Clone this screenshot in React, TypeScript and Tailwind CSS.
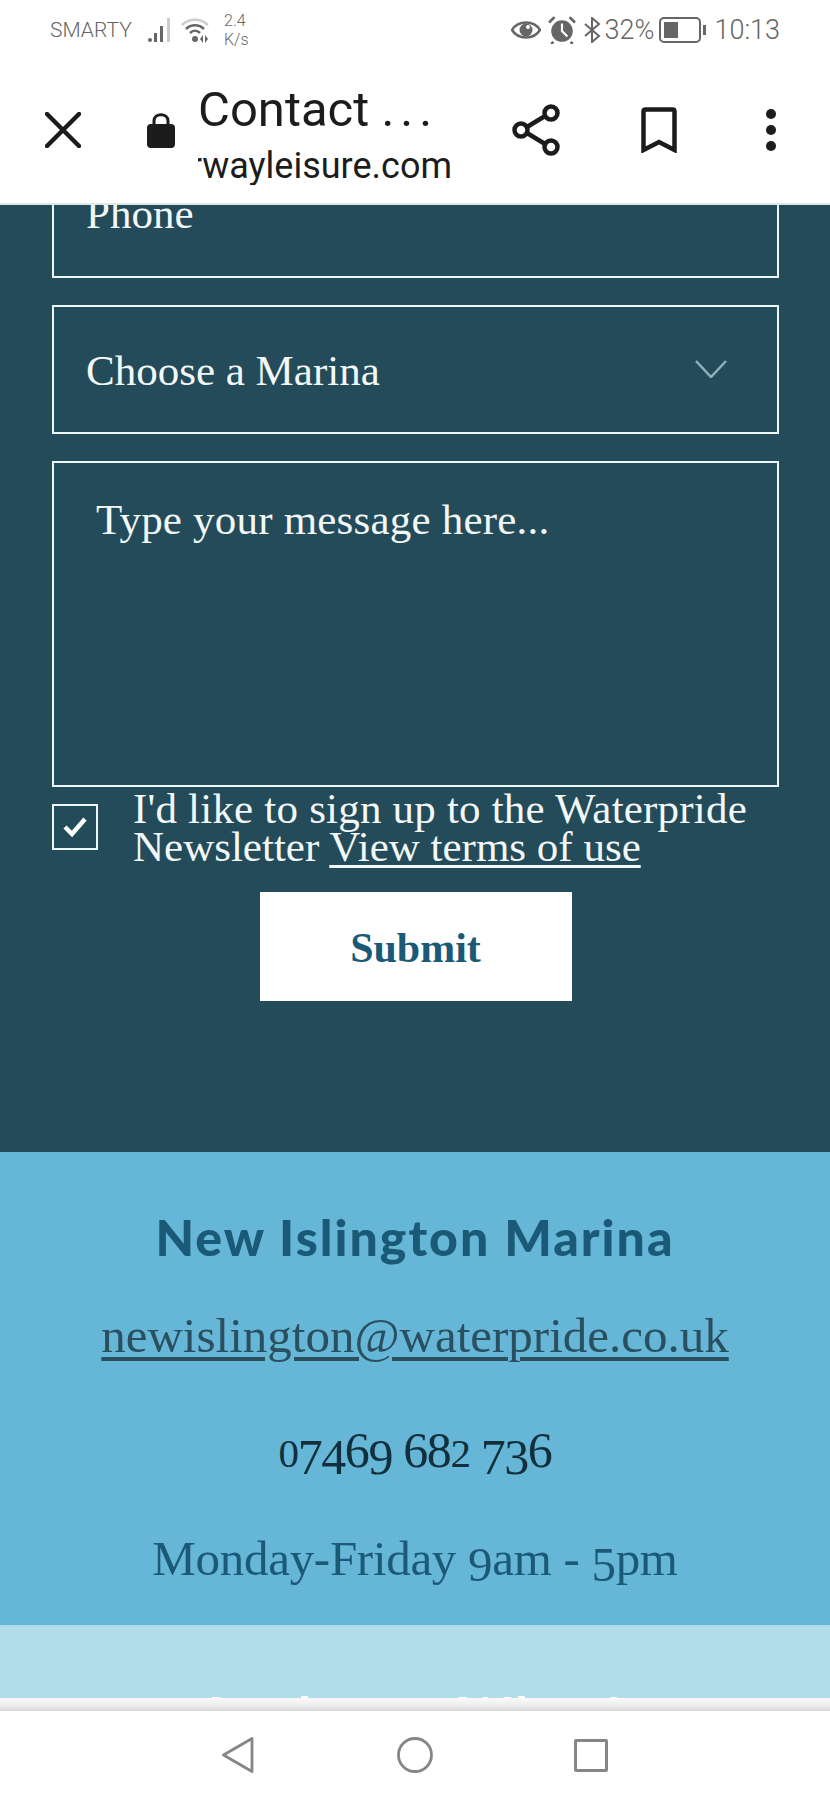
import React from "react";

const serif = "font-['Liberation_Serif',serif]";

// the site's serif has old-style figures, Liberation has none
function OldStyle({ text }: { text: string }) {
  return (
    <>
      {text.split("").map((c, i) => {
        if ("012".includes(c)) return <span key={i} className="text-[0.82em] leading-none">{c}</span>;
        if ("34579".includes(c)) return <span key={i} className="align-[-0.13em] leading-none">{c}</span>;
        return <span key={i}>{c}</span>;
      })}
    </>
  );
}

function StatusBar() {
  return (
    <div className="flex h-[70px] items-center bg-white pb-[10px] pl-[50px] text-[#666] font-['Roboto',sans-serif]">
      <span className="w-[98px] text-[21px] font-light leading-none">SMARTY</span>
      {/* signal */}
      <svg width="26" height="26" viewBox="0 0 26 26">
        <circle cx="2" cy="23" r="2" fill="#666" />
        <rect x="6" y="16" width="3" height="9" fill="#666" />
        <rect x="12" y="9" width="3" height="16" fill="#666" />
        <rect x="19" y="1" width="3" height="24" fill="#ccc" />
      </svg>
      {/* wifi */}
      <svg width="30" height="26" viewBox="0 0 30 26" className="ml-[7px]">
        <path d="M1 8 C8 1 20 1 27 8" fill="none" stroke="#ccc" strokeWidth="2.5" />
        <path d="M5 12 C10 7 18 7 23 12" fill="none" stroke="#666" strokeWidth="2.5" />
        <path d="M9 16 C12 13 16 13 19 16" fill="none" stroke="#666" strokeWidth="2.5" />
        <circle cx="14" cy="22" r="3" fill="#666" />
        <path d="M22 18 L22 26 L19 22 Z M24 18 L24 26 L27 22 Z" fill="#666" />
      </svg>
      <div className="ml-[13px] flex flex-col text-[16px] font-light leading-[19px]">
        <span>2.4</span>
        <span>K/s</span>
      </div>
      {/* eye */}
      <svg width="30" height="22" viewBox="0 0 30 22" className="ml-[262px]">
        <path d="M1 11 C7 1 23 1 29 11 C23 21 7 21 1 11 Z" fill="none" stroke="#666" strokeWidth="2.5" />
        <circle cx="15" cy="11" r="6.5" fill="#666" />
        <circle cx="17" cy="8" r="2" fill="#fff" />
      </svg>
      {/* alarm */}
      <svg width="28" height="28" viewBox="0 0 26 26" className="ml-[7px]">
        <circle cx="13" cy="14" r="10" fill="#666" />
        <path d="M1 6 L6 1 M25 6 L20 1 M5 24 L3 26 M21 24 L23 26" stroke="#666" strokeWidth="2.5" />
        <path d="M13 7 L13 14 L18 19" fill="none" stroke="#fff" strokeWidth="2" />
      </svg>
      {/* bluetooth */}
      <svg width="18" height="26" viewBox="0 0 18 26" className="ml-[7px]">
        <path d="M2 7 L16 19 L9 25 L9 1 L16 7 L2 19" fill="none" stroke="#666" strokeWidth="2" />
      </svg>
      <span className="ml-[4px] text-[27px] font-light leading-none">32%</span>
      {/* battery */}
      <svg width="47" height="26" viewBox="0 0 47 26" className="ml-[4px]">
        <rect x="1" y="1" width="40" height="24" rx="4" fill="none" stroke="#666" strokeWidth="2" />
        <rect x="5" y="5" width="14" height="16" fill="#666" />
        <rect x="44" y="8" width="3" height="10" fill="#666" />
      </svg>
      <span className="ml-[9px] text-[27px] font-light leading-none">10:13</span>
    </div>
  );
}

function Toolbar() {
  return (
    <div className="flex h-[135px] items-center border-b-2 border-[#dfe6e3] bg-white pb-[14px] text-[#1c1c1c]">
      <svg width="36" height="36" viewBox="0 0 36 36" className="ml-[45px]">
        <path d="M2 2 L34 34 M34 2 L2 34" stroke="#1c1c1c" strokeWidth="4.5" strokeLinecap="round" />
      </svg>
      <svg width="28" height="36" viewBox="0 0 28 36" className="ml-[66px]">
        <path d="M7 15 V9 C7 0.5 21 0.5 21 9 V15" fill="none" stroke="#1c1c1c" strokeWidth="3" />
        <rect x="0" y="12" width="28" height="24" rx="4" fill="#1c1c1c" />
      </svg>
      <div className="ml-[23px] flex h-[110px] w-[254px] flex-col font-['Roboto',sans-serif]">
        <span className="mt-[8px] whitespace-nowrap text-[49px] leading-[54px]">
          Contact <span className="tracking-[6px]">...</span>
        </span>
        <div className="mt-[7px] flex justify-end overflow-hidden">
          <span className="whitespace-nowrap text-[36px] leading-[44px]">waterwayleisure.com</span>
        </div>
      </div>
      <svg width="48" height="52" viewBox="0 0 48 52" className="ml-[60px]">
        <path d="M10 26 L38 9 M10 26 L38 43" stroke="#1c1c1c" strokeWidth="4.5" />
        <circle cx="9" cy="26" r="6.5" fill="#fff" stroke="#1c1c1c" strokeWidth="4.5" />
        <circle cx="39" cy="9" r="6.5" fill="#fff" stroke="#1c1c1c" strokeWidth="4.5" />
        <circle cx="39" cy="43" r="6.5" fill="#fff" stroke="#1c1c1c" strokeWidth="4.5" />
      </svg>
      <svg width="36" height="46" viewBox="0 0 36 46" className="ml-[81px]">
        <path d="M2.5 43 V4.5 Q2.5 2.5 4.5 2.5 H31.5 Q33.5 2.5 33.5 4.5 V43 L18 35 Z" fill="none" stroke="#1c1c1c" strokeWidth="4.5" />
      </svg>
      <svg width="10" height="42" viewBox="0 0 10 42" className="ml-[89px]">
        <circle cx="5" cy="5" r="5" fill="#1c1c1c" />
        <circle cx="5" cy="21" r="5" fill="#1c1c1c" />
        <circle cx="5" cy="37" r="5" fill="#1c1c1c" />
      </svg>
    </div>
  );
}

function ContactForm() {
  return (
    <div className={`h-[947px] overflow-hidden bg-[#244b5a] pl-[52px] pr-[51px] text-[#f2f8f8] ${serif}`}>
      <div className="-mt-[56px] flex h-[129px] items-center border-2 border-[#eef7f7] pl-[32px] text-[43px] leading-none">
        Phone
      </div>
      <div className="mt-[27px] flex h-[129px] items-center justify-between border-2 border-[#eef7f7] pb-[1px] pl-[32px] pr-[50px] text-[43px] leading-none">
        <span className="mt-[2px]">Choose a Marina</span>
        <svg width="32" height="18" viewBox="0 0 32 18">
          <path d="M1 1 L16 17 L31 1" fill="none" stroke="#8fb0b8" strokeWidth="2.5" />
        </svg>
      </div>
      <div className="mt-[27px] h-[326px] border-2 border-[#eef7f7] pl-[42px] pt-[33px] text-[43px] leading-[48px] tracking-[0.2px]">
        Type your message here...
      </div>
      <div className="mt-[1px] flex h-[77px] items-center">
        <div className="flex h-[46px] w-[46px] shrink-0 items-center justify-center border-2 border-[#eef7f7]">
          <svg width="26" height="22" viewBox="0 0 26 22">
            <path d="M3 11 L10 18 L23 3" fill="none" stroke="#fff" strokeWidth="4.5" />
          </svg>
        </div>
        <p className="ml-[35px] mt-[3px] text-[43px] leading-[38.5px]">
          <span className="tracking-[0.2px]">I'd like to sign up to the Waterpride</span>
          <br />
          Newsletter <span className="underline decoration-[3px] underline-offset-[4px]">View terms of use</span>
        </p>
      </div>
      <div className="mt-[27px] flex justify-center">
        <button className="h-[109px] w-[312px] bg-white pt-[3px] text-[42px] font-bold text-[#1b5a76]">Submit</button>
      </div>
    </div>
  );
}

function MarinaInfo() {
  return (
    <div className={`flex h-[473px] flex-col items-center bg-[#66b6d8] ${serif}`}>
      <h2 className="mt-[58px] font-['Lato',sans-serif] text-[50px] font-black leading-[54px] tracking-[2px] text-[#1b5a76]">
        New Islington Marina
      </h2>
      <a className="mt-[42px] text-[49px] leading-[60px] text-[#2a5060] underline decoration-[4px] underline-offset-[5px]">
        newislington@waterpride.co.uk
      </a>
      <p className="mt-[54px] h-[60px] text-[50px] leading-[60px] tracking-[-1.4px] text-[#12303c]">
        <OldStyle text="07469 682 736" />
      </p>
      <p className="mt-[49px] h-[60px] text-[49px] leading-[60px] tracking-[-0.3px] text-[#1b5a76]">
        <OldStyle text="Monday-Friday 9am - 5pm" />
      </p>
    </div>
  );
}

function NextMarina() {
  return (
    <div className="flex h-[73px] justify-center overflow-hidden bg-[#b2dcea]">
      <h2 className="mt-[62px] font-['Lato',sans-serif] text-[50px] font-black leading-[54px] tracking-[4px] text-white">
        Lockgate Wharf
      </h2>
    </div>
  );
}

function NavBar() {
  return (
    <div className="flex h-[102px] flex-col bg-white">
      <div className="h-[13px] bg-linear-to-b from-[#fafafa] via-[#efefef] to-[#d9d9d9]" />
      <div className="mt-[26px] flex items-center pl-[222px]">
        <svg width="32" height="36" viewBox="0 0 32 36">
          <path d="M30 1.5 V34.5 L1.5 18 Z" fill="none" stroke="#868686" strokeWidth="2.8" strokeLinejoin="round" />
        </svg>
        <svg width="36" height="36" viewBox="0 0 36 36" className="ml-[143px]">
          <circle cx="18" cy="18" r="16.5" fill="none" stroke="#868686" strokeWidth="2.8" />
        </svg>
        <div className="ml-[141px] h-[33px] w-[34px] rounded-[2px] border-[3px] border-[#868686]" />
      </div>
    </div>
  );
}

export default function App() {
  return (
    <div className="h-[1800px] w-[830px] overflow-hidden">
      <StatusBar />
      <Toolbar />
      <ContactForm />
      <MarinaInfo />
      <NextMarina />
      <NavBar />
    </div>
  );
}
